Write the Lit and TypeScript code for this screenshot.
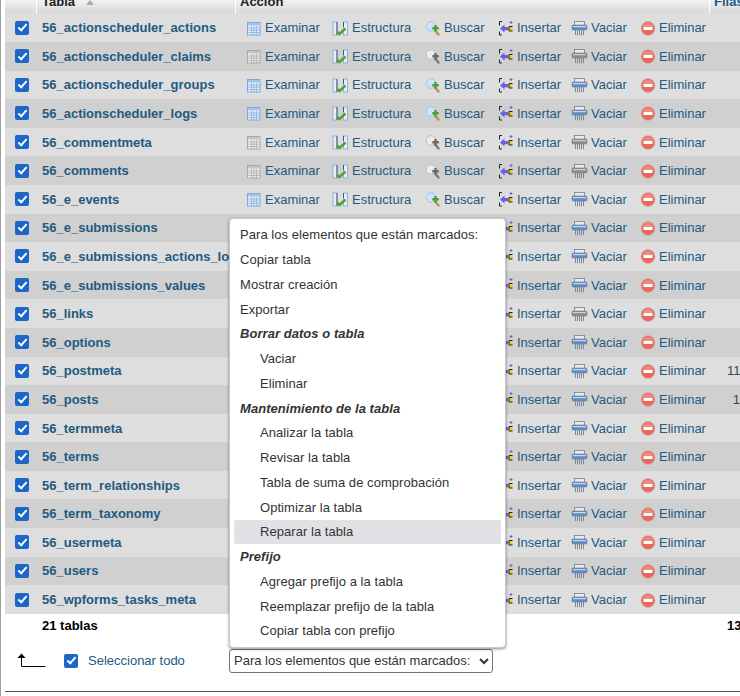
import { LitElement, html, css, svg } from "lit";
import { customElement } from "lit/decorators.js";

const TABLES: [string, boolean, string][] = [
  ["56_actionscheduler_actions", false, ""],
  ["56_actionscheduler_claims", true, ""],
  ["56_actionscheduler_groups", false, ""],
  ["56_actionscheduler_logs", false, ""],
  ["56_commentmeta", true, ""],
  ["56_comments", true, ""],
  ["56_e_events", false, ""],
  ["56_e_submissions", false, ""],
  ["56_e_submissions_actions_log", false, ""],
  ["56_e_submissions_values", false, ""],
  ["56_links", true, ""],
  ["56_options", false, ""],
  ["56_postmeta", false, "11"],
  ["56_posts", false, "1"],
  ["56_termmeta", false, ""],
  ["56_terms", false, ""],
  ["56_term_relationships", false, ""],
  ["56_term_taxonomy", false, ""],
  ["56_usermeta", false, ""],
  ["56_users", false, ""],
  ["56_wpforms_tasks_meta", false, ""],
];

const browseIcon = (g: boolean) => {
  const c = g ? "#a8a8a8" : "#7fa9dc";
  const f = g ? "#efefef" : "#e6effa";
  return svg`<svg width="16" height="16" viewBox="0 0 16 16">
    <rect x="1.5" y="2.500" width="12.500" height="12.500" fill="${f}" stroke="${c}"/>
    <rect x="2" y="3" width="11.500" height="2.500" fill="${g ? "#c4c4c4" : "#a4c3ea"}"/>
    <path d="M2 8h12M2 10.200h12M2 12.500h12M5.500 6v9M8 6v9M10.500 6v9" stroke="${c}" stroke-width=".7" fill="none"/>
  </svg>`;
};
const structIcon = () => svg`<svg width="17" height="16" viewBox="0 0 17 16">
  <rect x="1" y="2" width="4" height="13" fill="#e6eefa" stroke="#7fa3d6" stroke-width=".8"/>
  <rect x="11.500" y="2" width="4" height="13" fill="#e6eefa" stroke="#7fa3d6" stroke-width=".8"/>
  <path d="M5 2v13M11.500 2v5" stroke="#3d5b80" stroke-width="1"/>
  <path d="M5 11.500l2.500 2.500 6-5.500" fill="none" stroke="#55a02c" stroke-width="2.400"/>
</svg>`;
const searchIcon = (g: boolean) => {
  const plus = g ? "#6b6b6b" : "#4a9f35";
  const handle = g ? "#7c7c7c" : "#c98f45";
  const lens = g ? "#ececec" : "#cfe3f8";
  const ring = g ? "#bdbdbd" : "#a4c4ea";
  return svg`<svg width="16" height="16" viewBox="0 0 16 16">
    <path d="M10.500 11l3 3.500" stroke="${handle}" stroke-width="2.400" stroke-linecap="round"/>
    <circle cx="6" cy="6.500" r="4.800" fill="${lens}" stroke="${ring}"/>
    <path d="M10.500 5v6.500M7.300 8.200h6.500" stroke="${plus}" stroke-width="2.400"/>
  </svg>`;
};
const insertIcon = () => svg`<svg width="16" height="16" viewBox="0 0 16 16">
  <path d="M4 1.500H1.500v4M1.500 11.500v3.500H4" fill="none" stroke="#222" stroke-width="1"/>
  <path d="M2 8.500l4.500-4v2.500h3.500v3.200H6.500v2.300z" fill="#6d5fdc"/>
  <rect x="11" y="6.500" width="3.500" height="4.500" fill="#f4cc22"/>
  <path d="M14.500 6.500H11v4.500h3.500" fill="none" stroke="#222" stroke-width="1"/>
  <path d="M13 1v3M11.500 2.500h3" stroke="#6d5fdc" stroke-width="1"/>
</svg>`;
const emptyIcon = (g: boolean) => {
  const a = g ? "#8d8d8d" : "#5f8ec6";
  const b = g ? "#cfcfcf" : "#c5daf0";
  const d = g ? "#7c7c7c" : "#72808f";
  return svg`<svg width="17" height="16" viewBox="0 0 17 16">
    <rect x="3.500" y="1.500" width="10" height="4" fill="#e9e9e9" stroke="${d}" stroke-width=".8"/>
    <rect x="1" y="5" width="15" height="5" rx="1" fill="${a}" stroke="${d}" stroke-width=".6"/>
    <rect x="2" y="6" width="13" height="1.200" fill="${b}"/>
    <path d="M4.500 10v5M6.500 10v5.500M8.500 10v5M10.500 10v5.500M12.500 10v5" stroke="${d}" stroke-width=".9"/>
  </svg>`;
};
const dropIcon = () => svg`<svg width="16" height="16" viewBox="0 0 16 16">
  <circle cx="8" cy="8.500" r="7" fill="#e8685e" stroke="#d3b8ab" stroke-width="1"/>
  <path d="M2.500 7a5.800 5.800 0 0 1 11 0z" fill="#f08a80"/>
  <rect x="3.500" y="7" width="9" height="3" rx=".5" fill="#fff"/>
</svg>`;

const MENU: [string, string][] = [
  ["Para los elementos que están marcados:", ""],
  ["Copiar tabla", ""],
  ["Mostrar creación", ""],
  ["Exportar", ""],
  ["Borrar datos o tabla", "gr"],
  ["Vaciar", "in"],
  ["Eliminar", "in"],
  ["Mantenimiento de la tabla", "gr"],
  ["Analizar la tabla", "in"],
  ["Revisar la tabla", "in"],
  ["Tabla de suma de comprobación", "in"],
  ["Optimizar la tabla", "in"],
  ["Reparar la tabla", "in hi"],
  ["Prefijo", "gr"],
  ["Agregar prefijo a la tabla", "in"],
  ["Reemplazar prefijo de la tabla", "in"],
  ["Copiar tabla con prefijo", "in"],
];

@customElement("app-root")
export class AppRoot extends LitElement {
  static styles = css`
    :host {
      display: block;
      width: 740px;
      height: 696px;
      overflow: hidden;
      background: #fff;
      font-family: "Liberation Sans", Arial, sans-serif;
      font-size: 13px;
      position: relative;
    }
    .page {
      margin-left: 5px;
      display: flex;
      flex-direction: column;
      width: 735px;
      height: 696px;
    }
    .bar {
      position: absolute;
      left: 0;
      top: 0;
      bottom: 0;
      width: 1px;
      background: #a0a0a0;
    }
    .head {
      height: 13.4px;
      flex: none;
      display: flex;
      overflow: hidden;
      background: linear-gradient(#f2f2f2, #d8d8d8);
      font-weight: 700;
      color: #222;
      line-height: 15px;
    }
    .cell {
      flex: none;
      height: 100%;
      box-sizing: border-box;
      display: flex;
      align-items: flex-end;
      padding-bottom: 4px;
      border-right: 1px solid #fff;
    }
    .h-a { width: 32px; }
    .h-t { width: 199px; padding-left: 5px; gap: 11px; }
    .h-c { width: 474px; padding-left: 4px; }
    .h-f { padding-left: 4px; color: #235a81; border-right: 0; }
    .sort {
      width: 0;
      height: 0;
      border: 4px solid transparent;
      border-top: 0;
      border-bottom: 5px solid #aaa;
      margin-bottom: 4px;
    }
    .row {
      display: flex;
      align-items: center;
      height: 28.6px;
      background: #dedede;
      overflow: hidden;
    }
    .row:nth-child(even) { background: #d0d0d0; }
    input[type="checkbox"] {
      appearance: none;
      width: 14px;
      height: 14px;
      margin: 0;
      border-radius: 2px;
      background: #1a66c9;
      position: relative;
      flex: none;
    }
    input[type="checkbox"]::after {
      content: "";
      position: absolute;
      left: 4.5px;
      top: 1.5px;
      width: 3px;
      height: 7px;
      border: solid #fff;
      border-width: 0 2px 2px 0;
      transform: rotate(42deg);
    }
    .c-a { width: 37px; padding-left: 10px; box-sizing: border-box; flex: none; display: flex; }
    .name {
      width: 204px;
      flex: none;
      font-weight: 700;
      color: #235a81;
      white-space: nowrap;
      overflow: hidden;
    }
    .acts { display: flex; align-items: center; width: 481px; flex: none; color: #235a81; }
    .act { display: flex; align-items: center; gap: 3px; flex: none; }
    .a1 { width: 86px; }
    .a2 { width: 93px; }
    .a3 { width: 73px; }
    .a4 { width: 73px; }
    .a5 { width: 69px; }
    .num { flex: 1; min-width: 0; text-align: right; color: #444; white-space: nowrap; }
    .foot {
      display: flex;
      height: 23px;
      align-items: center;
      flex: none;
      font-weight: 700;
      color: #000;
    }
    .foot .t { margin-left: 37px; width: 685px; flex: none; }
    .foot .n { white-space: nowrap; }
    .sel { display: flex; align-items: center; height: 24px; margin-top: 12px; flex: none; }
    .arrow { width: 47px; margin-left: 12px; flex: none; display: flex; }
    .check-all { display: flex; align-items: center; gap: 10px; color: #235a81; width: 165px; flex: none; }
    select {
      width: 264px;
      height: 24px;
      font: inherit;
      color: #333;
      background: #fff;
      border: 1px solid #767676;
      border-radius: 3px;
      padding: 0;
    }
    .rule { margin-top: 18px; border-top: 1px solid #555; flex: none; }
    .menu {
      position: absolute;
      left: 229px;
      top: 218px;
      width: 277px;
      height: 430px;
      box-sizing: border-box;
      padding: 3.5px 4px;
      background: #fff;
      border-radius: 4px;
      border: 1px solid #c8c8c8;
      box-shadow: 0 1px 3px rgba(0, 0, 0, 0.45);
      color: #333;
      letter-spacing: 0.05px;
      display: flex;
      flex-direction: column;
    }
    .mi { height: 24.75px; display: flex; align-items: center; padding-left: 6px; flex: none; white-space: nowrap; border-radius: 2px; }
    .in { padding-left: 26px; }
    .gr { font-weight: 700; font-style: italic; }
    .hi { background: #e1e1e6; }
  `;

  render() {
    return html`
      <div class="bar"></div>
      <div class="page">
        <div class="head">
          <div class="cell h-a"></div>
          <div class="cell h-t"><span>Tabla</span><span class="sort"></span></div>
          <div class="cell h-c"><span>Acción</span></div>
          <div class="cell h-f"><span>Filas</span></div>
        </div>
        <div class="rows">
          ${TABLES.map(
            ([n, g, num]) => html`<div class="row">
              <div class="c-a"><input type="checkbox" checked /></div>
              <div class="name">${n}</div>
              <div class="acts">
                <span class="act a1">${browseIcon(g)}Examinar</span>
                <span class="act a2">${structIcon()}Estructura</span>
                <span class="act a3">${searchIcon(g)}Buscar</span>
                <span class="act a4">${insertIcon()}Insertar</span>
                <span class="act a5">${emptyIcon(g)}Vaciar</span>
                <span class="act">${dropIcon()}Eliminar</span>
              </div>
              <div class="num">${num}</div>
            </div>`
          )}
        </div>
        <div class="foot"><span class="t">21 tablas</span><span class="n">13</span></div>
        <div class="sel">
          <div class="arrow">
            <svg width="30" height="15" viewBox="0 0 30 15">
              <path d="M4.500 3v10.500h24" fill="none" stroke="#000" stroke-width="1"/>
              <path d="M0.500 5L4.500 0.500 8.500 5z" fill="#000"/>
            </svg>
          </div>
          <label class="check-all"><input type="checkbox" checked />Seleccionar todo</label>
          <select><option>Para los elementos que están marcados:</option></select>
        </div>
        <div class="rule"></div>
      </div>
      <div class="menu">
        ${MENU.map(([t, c]) => html`<div class="mi ${c}">${t}</div>`)}
      </div>
    `;
  }
}
